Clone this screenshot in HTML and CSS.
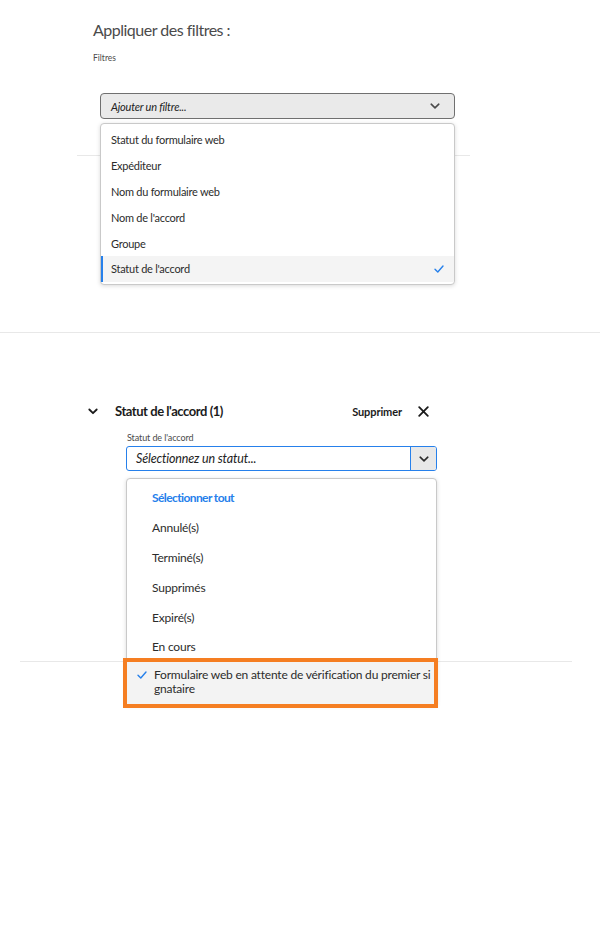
FILE: index.html
```html
<!DOCTYPE html>
<html lang="fr">
<head>
<meta charset="utf-8">
<title>Appliquer des filtres</title>
<link rel="stylesheet" href="styles.css">
</head>
<body>
<div class="filters">
  <h1 class="title">Appliquer des filtres :</h1>
  <div class="lbl">Filtres</div>
  <div class="picker">
    <div class="picker-btn">
      <span class="ph">Ajouter un filtre...</span>
      <svg class="chev" width="10" height="6" viewBox="0 0 10 6"><path d="M1.2 1.2 L5 4.8 L8.8 1.2" fill="none" stroke="#4b4b4b" stroke-width="1.6" stroke-linecap="round" stroke-linejoin="round"/></svg>
    </div>
    <ul class="menu menu1">
      <li class="item">Statut du formulaire web</li>
      <li class="item">Expéditeur</li>
      <li class="item">Nom du formulaire web</li>
      <li class="item">Nom de l'accord</li>
      <li class="item">Groupe</li>
      <li class="item sel">Statut de l'accord
        <svg class="check" width="10" height="8" viewBox="0 0 10 8"><path d="M1 4.2 L3.8 7 L9 1" fill="none" stroke="#2680eb" stroke-width="1.4" stroke-linecap="round" stroke-linejoin="round"/></svg>
      </li>
    </ul>
  </div>
  <div class="rule1"></div>
</div>
<div class="rule2"></div>

<section class="group">
  <div class="group-head">
    <svg class="chev-lg" width="10" height="7" viewBox="0 0 10 7"><path d="M1.3 1.5 L5 5.2 L8.7 1.5" fill="none" stroke="#1b1b1b" stroke-width="1.8" stroke-linecap="round" stroke-linejoin="round"/></svg>
    <span class="group-title">Statut de l'accord (1)</span>
    <span class="remove">Supprimer</span>
    <svg class="close" width="11" height="11" viewBox="0 0 11 11"><path d="M1.2 1.2 L9.8 9.8 M9.8 1.2 L1.2 9.8" fill="none" stroke="#1b1b1b" stroke-width="1.8" stroke-linecap="round"/></svg>
  </div>
  <div class="field">
    <div class="field-lbl">Statut de l'accord</div>
    <div class="combo">
      <div class="combo-input">Sélectionnez un statut...</div>
      <div class="combo-btn">
        <svg width="10" height="6" viewBox="0 0 10 6"><path d="M1.2 1.2 L5 4.8 L8.8 1.2" fill="none" stroke="#2c2c2c" stroke-width="1.6" stroke-linecap="round" stroke-linejoin="round"/></svg>
      </div>
      <ul class="menu menu2">
        <li class="opt all">Sélectionner tout</li>
        <li class="opt">Annulé(s)</li>
        <li class="opt">Terminé(s)</li>
        <li class="opt">Supprimés</li>
        <li class="opt">Expiré(s)</li>
        <li class="opt">En cours</li>
        <li class="opt picked">
          <svg class="check2" width="10" height="8" viewBox="0 0 10 8"><path d="M1 4.2 L3.8 7 L9 1" fill="none" stroke="#2680eb" stroke-width="1.4" stroke-linecap="round" stroke-linejoin="round"/></svg>
          <span>Formulaire web en attente de vérification du premier si<br>gnataire</span>
        </li>
      </ul>
    </div>
  </div>
  <div class="rule3"></div>
</section>
</body>
</html>
```
FILE: styles.css
```css
* { box-sizing: border-box; }
html, body { margin: 0; padding: 0; background: #fff; }
body {
  font-family: Lato, "Noto Sans", sans-serif;
  color: #2c2c2c;
  width: 600px;
  height: 930px;
}
ul { list-style: none; margin: 0; padding: 0; }

.filters { padding: 20px 0 0 93px; }
.title {
  margin: 0;
  font-size: 16px;
  line-height: 20px;
  font-weight: 400;
  color: #4b4b4b;
  letter-spacing: -0.5px;
}
.lbl {
  margin-top: 13px;
  font-size: 8.5px;
  line-height: 10px;
  color: #4b4b4b;
}
.picker {
  position: relative;
  margin: 30px 0 0 7px;
  width: 355px;
}
.picker-btn {
  height: 26px;
  border: 1px solid #707070;
  border-radius: 4px;
  background: #eaeaea;
  display: flex;
  align-items: center;
  justify-content: space-between;
  padding: 0 14px 0 10px;
}
.ph {
  font-style: italic;
  font-size: 11px;
  color: #222;
  letter-spacing: -0.2px;
}
.chev { display: block; }

.menu {
  position: absolute;
  left: 0;
  right: 0;
  background: #fff;
  border: 1px solid #c9c9c9;
  border-radius: 4px;
  box-shadow: 0 1px 4px rgba(0, 0, 0, 0.15);
  z-index: 2;
}
.menu1 { top: 30px; padding: 3px 0 2px; }
.item {
  height: 25.8px;
  display: flex;
  align-items: center;
  justify-content: space-between;
  padding: 0 10px 0 10px;
  font-size: 11px;
  color: #2c2c2c;
  letter-spacing: -0.25px;
}
.item.sel {
  background: #f4f4f4;
  border-left: 2px solid #2680eb;
  padding-left: 8px;
}
.check { display: block; }

.rule1 {
  margin: 36px 0 0 -16px;
  width: 393px;
  border-top: 1px solid #e8e8e8;
}
.rule2 {
  margin-top: 176px;
  border-top: 1px solid #e8e8e8;
}

.group { padding-top: 68px; }
.group-head {
  display: flex;
  align-items: center;
  height: 20px;
  padding-left: 88px;
  width: 429px;
}
.chev-lg { display: block; margin-right: 17px; }
.group-title {
  font-size: 13px;
  font-weight: 700;
  color: #1b1b1b;
  letter-spacing: -0.45px;
}
.remove {
  margin-left: auto;
  font-size: 11px;
  font-weight: 700;
  color: #1b1b1b;
  margin-right: 16px;
  letter-spacing: -0.1px;
}
.close { display: block; }

.field { margin: 11px 0 0 126px; width: 311px; }
.field-lbl {
  padding-left: 1px;
  font-size: 9px;
  line-height: 12px;
  color: #4b4b4b;
  letter-spacing: -0.1px;
}
.combo {
  position: relative;
  margin-top: 2px;
  height: 25px;
  display: flex;
  border: 1px solid #2680eb;
  border-radius: 3px;
}
.combo-input {
  flex: 1;
  display: flex;
  align-items: center;
  padding-left: 9px;
  font-size: 12.5px;
  font-style: italic;
  color: #222;
  letter-spacing: -0.15px;
}
.combo-btn {
  width: 26px;
  border-left: 1px solid #2680eb;
  background: #e8e8e8;
  display: flex;
  align-items: center;
  justify-content: center;
  border-radius: 0 2px 2px 0;
}
.combo-btn svg { display: block; }

.menu2 { top: 31px; left: -1px; right: -1px; padding: 4px 0 0; border-radius: 4px 4px 0 0; }
.opt {
  height: 29.8px;
  display: flex;
  align-items: center;
  padding-left: 25px;
  font-size: 12px;
  color: #2c2c2c;
  letter-spacing: -0.2px;
}
.opt.all {
  color: #2680eb;
  font-weight: 700;
  letter-spacing: -0.6px;
}
.opt.picked {
  height: 42px;
  align-items: flex-start;
  margin-right: 2px;
  padding: 6px 0 0 10px;
  background: #f3f3f3;
  outline: 4px solid #f57e22;
  line-height: 14px;
}
.check2 { display: block; margin: 3px 7px 0 0; flex: none; }

.rule3 {
  margin: 190px 0 0 20px;
  width: 552px;
  border-top: 1px solid #e8e8e8;
}
```
